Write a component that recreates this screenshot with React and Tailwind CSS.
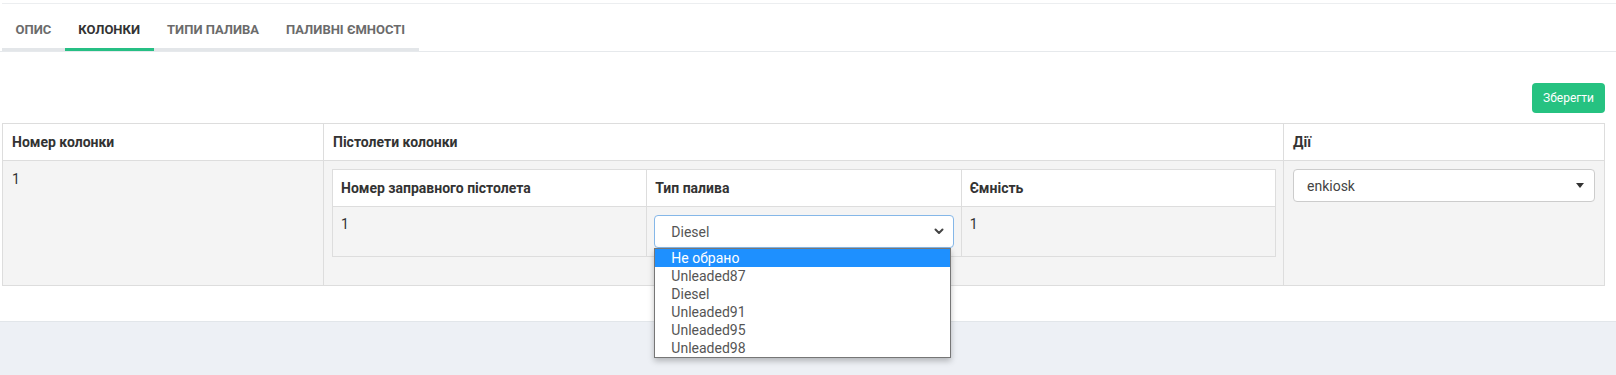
import { useState } from "react";

const tabs = ["Опис", "Колонки", "Типи палива", "Паливні ємності"];
const fuelOptions = ["Не обрано", "Unleaded87", "Diesel", "Unleaded91", "Unleaded95", "Unleaded98"];

function FuelSelect() {
  return (
    <div className="relative">
      <div className="h-[33px] flex items-center justify-between rounded-[4px] border border-[#85b7e8] bg-white pl-[16px] pr-[9px] text-[14px] text-[#555]">
        <span>Diesel</span>
        <svg width="10" height="7" viewBox="0 0 10 7" fill="none">
          <path d="M1.5 1.5l3.5 3.5 3.5-3.5" stroke="#444" strokeWidth="2" strokeLinecap="round" strokeLinejoin="round" />
        </svg>
      </div>
      {/* native dropdown list, shown open */}
      <ul className="absolute left-0 top-full z-10 w-[297px] border border-[#767676] bg-white shadow-[0_3px_6px_rgba(0,0,0,0.25)] text-[14px] leading-[18px] text-[#555]">
        {fuelOptions.map((opt, i) => (
          <li key={opt} className={`pl-[16px] h-[18px] ${i === 0 ? "bg-[#1e90ff] text-white" : ""}`}>
            {opt}
          </li>
        ))}
      </ul>
    </div>
  );
}

export default function App() {
  const [active] = useState(1);

  return (
    <div className="min-h-screen bg-[#edf0f5] font-['Roboto',sans-serif] text-[#333]">
      <div className="h-[322px] bg-white border-b border-[#e2e6ea] pt-[3px]">
        <div className="border-t border-[#eceef0] ml-[2px]" />

        {/* Tabs */}
        <div className="border-b border-[#e6e9ec] pl-[2px]">
          <ul className="flex">
            {tabs.map((t, i) => (
              <li
                key={t}
                className={`px-[13.5px] pt-[18px] pb-[10px] leading-[16px] text-[13px] font-bold uppercase border-b-[3px] ${
                  i === active ? "border-[#26bf84] text-[#333]" : "border-[#e3e6e9] text-[#6b6b6b]"
                }`}
              >
                {t}
              </li>
            ))}
          </ul>
        </div>

        <div className="pl-[2px] pr-[11px]">
          <div className="flex justify-end pt-[31px] pb-[10px]">
            <button className="h-[30px] w-[73px] rounded-[4px] bg-[#26c281] text-[12px] text-white">Зберегти</button>
          </div>

          <table className="w-full table-fixed border-collapse border border-[#e3e8ee] text-[14px] leading-[18px]">
            <colgroup>
              <col className="w-[321px]" />
              <col className="w-[960px]" />
              <col />
            </colgroup>
            <thead>
              <tr className="bg-white">
                <th className="border border-[#dddddd] px-[9px] py-[9px] text-left font-bold">Номер колонки</th>
                <th className="border border-[#dddddd] px-[9px] py-[9px] text-left font-bold">Пістолети колонки</th>
                <th className="border border-[#dddddd] px-[9px] py-[9px] text-left font-bold">Дії</th>
              </tr>
            </thead>
            <tbody>
              <tr className="bg-[#f4f4f4] align-top">
                <td className="border border-[#dddddd] px-[9px] py-[9px]">1</td>
                <td className="border border-[#dddddd] pl-[8px] pr-[7px] pt-[8px] pb-[8px]">
                  <table className="w-full table-fixed border-collapse border border-[#dddddd] mb-[20px]">
                    <thead>
                      <tr className="bg-white">
                        <th className="border border-[#dddddd] px-[8px] py-[9px] text-left font-bold">Номер заправного пістолета</th>
                        <th className="border border-[#dddddd] px-[8px] py-[9px] text-left font-bold">Тип палива</th>
                        <th className="border border-[#dddddd] px-[8px] py-[9px] text-left font-bold">Ємність</th>
                      </tr>
                    </thead>
                    <tbody>
                      <tr className="bg-[#f4f4f4] align-top">
                        <td className="border border-[#dddddd] px-[8px] pt-[8px] pb-[8px]">1</td>
                        <td className="border border-[#dddddd] px-[7px] pt-[8px] pb-[8px]">
                          <FuelSelect />
                        </td>
                        <td className="border border-[#dddddd] px-[8px] pt-[8px] pb-[8px]">1</td>
                      </tr>
                    </tbody>
                  </table>
                </td>
                <td className="border border-[#dddddd] px-[9px] pt-[8px]">
                  <div className="h-[33px] flex items-center justify-between rounded-[4px] border border-[#cccccc] bg-white pl-[13px] pr-[10px] text-[14px] text-[#444]">
                    <span>enkiosk</span>
                    <svg width="8" height="5" viewBox="0 0 8 5">
                      <path d="M0 0h8L4 5z" fill="#333" />
                    </svg>
                  </div>
                </td>
              </tr>
            </tbody>
          </table>
        </div>
      </div>
    </div>
  );
}
